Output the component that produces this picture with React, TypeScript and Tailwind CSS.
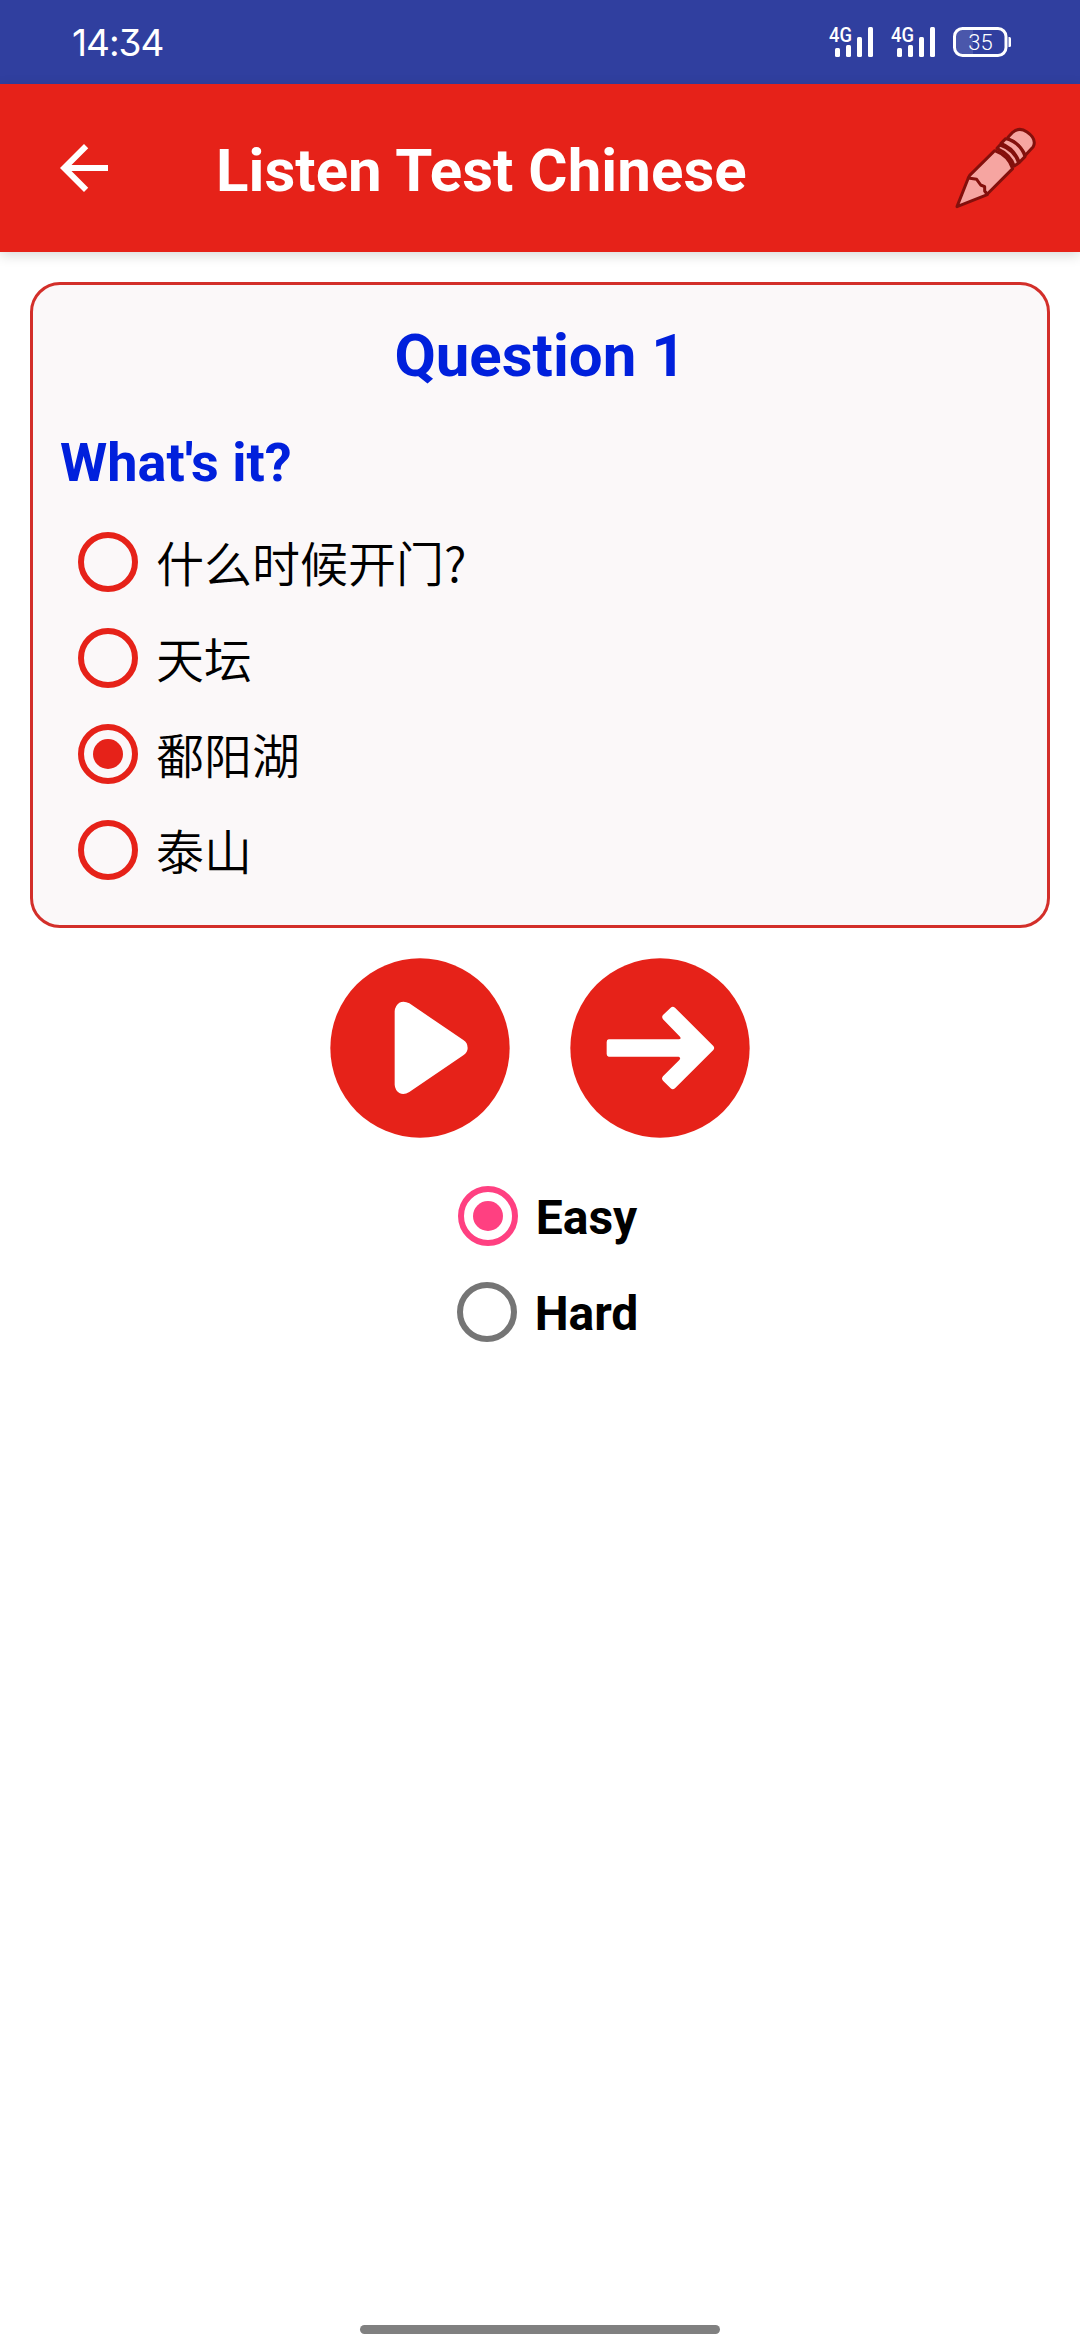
import { useState } from 'react'

const answers = ['什么时候开门?', '天坛', '鄱阳湖', '泰山']

function Signal() {
  return (
    <svg className="w-[46px] h-[42px]" viewBox="0 -5 46 42" fill="#fff">
      <text x="0" y="15.500" fontSize="19.500" fontWeight="500" fontFamily="Roboto, sans-serif" textLength="23" lengthAdjust="spacingAndGlyphs">
        4G
      </text>
      <rect x="6" y="22" width="5" height="9" rx="1.500" />
      <rect x="17" y="19" width="5" height="12" rx="1.500" />
      <rect x="28" y="11" width="5" height="20" rx="1.500" />
      <rect x="39" y="1" width="5" height="30" rx="1.500" />
    </svg>
  )
}

function Battery() {
  return (
    <svg className="w-[60px] h-[32px]" viewBox="0 0 60 32">
      <path d="M9 3h11v26H9a6 6 0 0 1-6-6V9a6 6 0 0 1 6-6z" fill="#fff" fillOpacity="0.13" />
      <rect x="1.500" y="2.500" width="51.500" height="27" rx="8" fill="none" stroke="#fff" strokeWidth="3" />
      <path d="M55.500 11h1a1.500 1.500 0 0 1 1.500 1.500v7a1.500 1.500 0 0 1-1.500 1.500h-1z" fill="#fff" />
      <text x="27.500" y="23.500" fontSize="22" fontWeight="350" fill="#fff" textAnchor="middle" fontFamily="Roboto, sans-serif">
        35
      </text>
    </svg>
  )
}

function Pencil() {
  return (
    <svg
      className="w-[85px] h-[85px]"
      viewBox="100 75 255 255"
      fill="#f6a5a1"
      stroke="#83100c"
      strokeWidth="9"
      strokeLinejoin="round"
      strokeLinecap="round"
    >
      <path d="M265 109L279 94Q299 77 322 93Q350 112 342 134L340 138L317 163Q300 126 265 113z" />
      <path d="M244 127L258 113Q302 125 316 167L299 184Q284 142 244 127z" />
      <path d="M232 142L241 132Q284 146 297 186L284 195Q272 160 232 142z" />
      <path d="M150 223L225 149Q266 164 279 203L203 279L146 231z" />
      <path d="M146 231L112 317L203 281L195 270V257L183 252L171 235z" />
    </svg>
  )
}

function Radio({ checked, color }: { checked: boolean; color: string }) {
  return (
    <svg className="w-[60px] h-[60px] shrink-0" viewBox="0 0 60 60">
      <circle cx="30" cy="30" r="27" fill="none" stroke={color} strokeWidth="6" />
      {checked && <circle cx="30" cy="30" r="15" fill={color} />}
    </svg>
  )
}

export default function App() {
  const [answer, setAnswer] = useState(2)
  const [level, setLevel] = useState('easy')

  return (
    <div className="flex flex-col w-[1080px] h-[2340px] bg-white font-['Roboto','Noto_Sans_CJK_SC',sans-serif]">
      {/* Status Bar */}
      <div className="flex items-center justify-between h-[84px] shrink-0 bg-[#303f9f] pl-[72px] pr-[67px]">
        <span className="text-white text-[37px] leading-none tracking-[-1px] font-['Inter',sans-serif] [font-feature-settings:'cv09']">
          14:34
        </span>
        <div className="flex items-center">
          <Signal />
          <div className="w-4" />
          <Signal />
          <div className="w-4" />
          <Battery />
        </div>
      </div>

      {/* Header */}
      <header className="relative flex items-center justify-between h-[168px] shrink-0 bg-[#e62219] pl-[60px] pr-[42px] shadow-[0_3px_12px_rgba(0,0,0,0.16)]">
        <div className="flex items-center">
          <svg className="w-12 h-12" viewBox="4 4 16 16" fill="#fff">
            <path d="M20 11H7.830l5.590-5.590L12 4l-8 8 8 8 1.410-1.410L7.830 13H20v-2z" />
          </svg>
          <h1 className="ml-[108px] pt-[5px] text-white text-[60px] leading-[70px] font-bold tracking-[0.05px]">
            Listen Test Chinese
          </h1>
        </div>
        <Pencil />
      </header>

      {/* Question Card */}
      <section className="mx-[30px] mt-[30px] shrink-0 h-[646px] rounded-[30px] border-[3px] border-[#d32f2a] bg-[#fbf8f9] pt-[36px] px-[27px]">
        <h2 className="text-center text-[#0020dc] text-[60px] leading-[70px] font-bold">Question 1</h2>
        <p className="mt-[40px] text-[#0020dc] text-[54px] leading-[63px] font-bold">What's it?</p>
        <div className="mt-5 pl-[18px]">
          {answers.map((text, i) => (
            <button key={text} onClick={() => setAnswer(i)} className="flex items-center h-24 gap-[18px] text-black">
              <Radio checked={answer === i} color="#e62219" />
              <span className="pb-[3px] text-[48px] leading-[56px] font-[350] font-['Noto_Sans_CJK_SC',sans-serif]">
                {text}
              </span>
            </button>
          ))}
        </div>
      </section>

      {/* Controls */}
      <div className="flex justify-center gap-[60px] mt-[30px]">
        <button aria-label="Play">
          <svg className="w-[180px] h-[180px]" viewBox="0 0 540 540">
            <circle cx="270" cy="270" r="269" fill="#e62219" />
            <path
              d="M194 160Q195 143 208 134Q222 127 238 136L400 246Q413 254 413 270Q413 283 400 292L238 402Q222 412 208 405Q195 396 194 380z"
              fill="#fff"
            />
          </svg>
        </button>
        <button aria-label="Next">
          <svg className="w-[180px] h-[180px]" viewBox="0 0 540 540">
            <circle cx="270" cy="270" r="269" fill="#e62219" />
            <path
              d="M116 244H326Q335 244 330 236L279 184Q274 177 279 171L302 149Q308 143 315 149L430 264Q435 270 430 276L315 391Q308 397 302 391L279 368Q273 362 279 355L328 306Q334 299 326 296H116Q110 295 110 288V252Q110 244 116 244z"
              fill="#fff"
            />
          </svg>
        </button>
      </div>

      {/* Level */}
      <div className="flex flex-col items-center mt-[30px] text-black text-[48px] leading-[56px] font-bold">
        <button onClick={() => setLevel('easy')} className="flex items-center h-24 gap-[18px] pl-[15px]">
          <Radio checked={level === 'easy'} color={level === 'easy' ? '#ff4081' : '#757575'} />
          <span className="pt-[3px]">Easy</span>
        </button>
        <button onClick={() => setLevel('hard')} className="flex items-center h-24 gap-[18px] pl-[15px]">
          <Radio checked={level === 'hard'} color={level === 'hard' ? '#ff4081' : '#757575'} />
          <span className="pt-[3px]">Hard</span>
        </button>
      </div>

      {/* Gesture Bar */}
      <div className="mt-auto mb-[6px] self-center w-[360px] h-[9px] rounded-full bg-[#808080]" />
    </div>
  )
}
